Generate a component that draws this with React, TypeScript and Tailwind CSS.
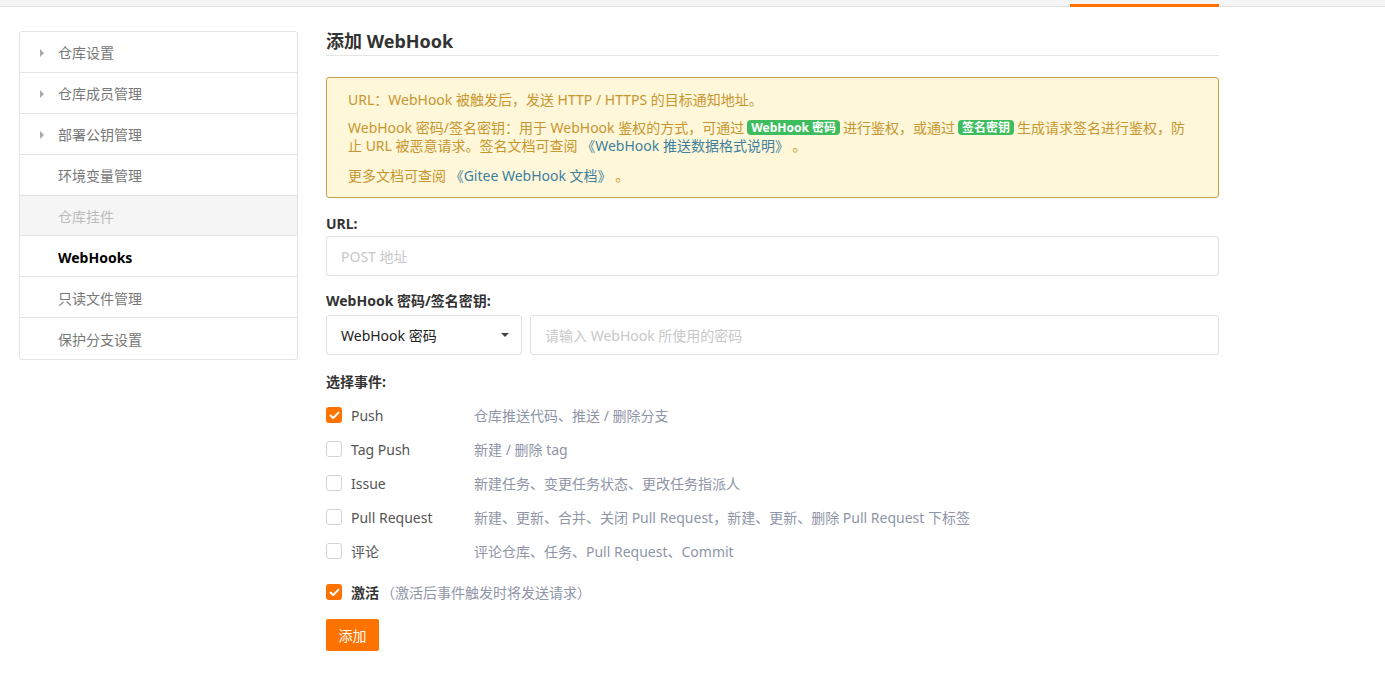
import React, { useState } from 'react';

const FONT = '"Noto Sans", "Noto Sans CJK SC", sans-serif';

const menu = [
  { label: '仓库设置', caret: true },
  { label: '仓库成员管理', caret: true },
  { label: '部署公钥管理', caret: true },
  { label: '环境变量管理' },
  { label: '仓库挂件', disabled: true },
  { label: 'WebHooks', active: true },
  { label: '只读文件管理' },
  { label: '保护分支设置' },
];

const events = [
  { name: 'Push', desc: '仓库推送代码、推送 / 删除分支', checked: true },
  { name: 'Tag Push', desc: '新建 / 删除 tag' },
  { name: 'Issue', desc: '新建任务、变更任务状态、更改任务指派人' },
  { name: 'Pull Request', desc: '新建、更新、合并、关闭 Pull Request，新建、更新、删除 Pull Request 下标签' },
  { name: '评论', desc: '评论仓库、任务、Pull Request、Commit' },
];

function Checkbox({ checked, onClick }: { checked: boolean; onClick: () => void }) {
  return (
    <button
      type="button"
      onClick={onClick}
      className={
        checked
          ? 'w-[16px] h-[16px] rounded-[3px] bg-[#fe7300] flex items-center justify-center shrink-0'
          : 'w-[16px] h-[16px] rounded-[3px] border border-[#d4d4d5] bg-white shrink-0'
      }
    >
      {checked && (
        <svg width="11" height="9" viewBox="0 0 11 9" fill="none">
          <path d="M1.5 4.5 L4.2 7 L9.5 1.6" stroke="white" strokeWidth="2" strokeLinecap="round" strokeLinejoin="round" />
        </svg>
      )}
    </button>
  );
}

function Badge({ children }: { children: React.ReactNode }) {
  return (
    <span className="inline-block align-[1px] bg-[#3dbd5d] text-white font-bold text-[12px] leading-[15px] px-[4px] rounded-[4px] mx-[3px]">
      {children}
    </span>
  );
}

export default function App() {
  const [checked, setChecked] = useState<boolean[]>(events.map((e) => !!e.checked));
  const [active, setActive] = useState(true);

  return (
    <div className="min-h-screen bg-white text-[#333]" style={{ fontFamily: FONT }}>
      {/* top nav strip */}
      <div className="h-[7px] bg-[#f5f5f5] border-b border-[#e0e0e0] flex">
        <div className="w-[1070px]" />
        <div className="w-[149px] h-[3px] mt-[4px] bg-[#fe7300]" />
      </div>

      <div className="flex pl-[19px] pt-[24px]">
        {/* sidebar */}
        <div className="w-[279px] h-[329px] border border-[#e3e3e3] rounded-[3px] flex flex-col overflow-hidden shrink-0">
          {menu.map((m, i) => (
            <div
              key={m.label}
              className={
                'h-[41px] flex items-center pt-[2px] text-[14px] ' +
                (i < menu.length - 1 ? 'border-b border-[#e3e3e3] ' : '') +
                (m.disabled ? 'bg-[#f5f5f5] text-[#bbbbbb] ' : m.active ? 'text-black font-bold ' : 'text-[#777] ')
              }
            >
              <div className="w-[38px] flex justify-end pr-[14px]">
                {m.caret && (
                  <svg width="4" height="8" viewBox="0 0 4 8">
                    <path d="M0 0 L4 4 L0 8 Z" fill="#aaa" />
                  </svg>
                )}
              </div>
              <span>{m.label}</span>
            </div>
          ))}
        </div>

        {/* main */}
        <div className="ml-[28px] w-[893px]">
          <h2 className="text-[18px] font-bold leading-[20px] pb-[4px] border-b border-[#e5e5e5] text-[#333]">添加 WebHook</h2>

          <div className="mt-[21px] h-[121px] bg-[#fef7da] border border-[#c2a04c] rounded-[3px] pl-[21px] pr-[22px] pt-[13px] text-[14px] leading-[18px] text-[#c7962e]">
            <p>URL：WebHook 被触发后，发送 HTTP / HTTPS 的目标通知地址。</p>
            <p className="mt-[10px]">
              WebHook 密码/签名密钥：用于 WebHook 鉴权的方式，可通过<Badge>WebHook 密码</Badge>进行鉴权，或通过<Badge>签名密钥</Badge>生成请求签名进行鉴权，防止 URL 被恶意请求。签名文档可查阅 <span className="text-[#3f7f9c]">《WebHook 推送数据格式说明》</span> 。
            </p>
            <p className="mt-[12px]">
              更多文档可查阅 <span className="text-[#3f7f9c]">《Gitee WebHook 文档》</span> 。
            </p>
          </div>

          <div className="mt-[17px] text-[14px] font-bold leading-[18px]">URL:</div>
          <input
            placeholder="POST 地址"
            className="mt-[3px] w-full h-[40px] border border-[#e0e0e0] rounded-[3px] px-[14px] text-[14px] outline-none placeholder:text-[#c8c8c8]"
          />

          <div className="mt-[16px] text-[14px] font-bold leading-[18px]">WebHook 密码/签名密钥:</div>
          <div className="mt-[5px] flex gap-[8px]">
            <div className="w-[196px] h-[40px] border border-[#e0e0e0] rounded-[3px] flex items-center justify-between pl-[14px] pr-[12px] text-[14px] text-[#222]">
              <span>WebHook 密码</span>
              <svg width="8" height="4" viewBox="0 0 8 4">
                <path d="M0 0 L8 0 L4 4 Z" fill="#444" />
              </svg>
            </div>
            <input
              placeholder="请输入 WebHook 所使用的密码"
              className="flex-1 h-[40px] border border-[#e0e0e0] rounded-[3px] px-[14px] text-[14px] outline-none placeholder:text-[#c8c8c8]"
            />
          </div>

          <div className="mt-[18px] text-[14px] font-bold leading-[18px]">选择事件:</div>
          <div className="mt-[7px] flex flex-col">
            {events.map((e, i) => (
              <div key={e.name} className="h-[34px] flex items-center text-[14px]">
                <Checkbox
                  checked={checked[i]}
                  onClick={() => setChecked(checked.map((c, j) => (j === i ? !c : c)))}
                />
                <span className="ml-[9px] w-[123px] text-[#555]">{e.name}</span>
                <span className="text-[#8f95a7]">{e.desc}</span>
              </div>
            ))}
          </div>

          <div className="mt-[7px] h-[34px] flex items-center text-[14px]">
            <Checkbox checked={active} onClick={() => setActive(!active)} />
            <span className="ml-[9px] font-bold text-[#333]">激活</span>
            <span className="ml-[2px] text-[#8f95a7]">（激活后事件触发时将发送请求）</span>
          </div>

          <button className="mt-[10px] h-[32px] w-[53px] bg-[#fe7300] text-white text-[14px] rounded-[2px]">添加</button>
        </div>
      </div>
    </div>
  );
}
